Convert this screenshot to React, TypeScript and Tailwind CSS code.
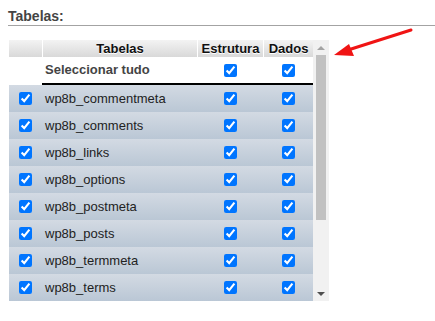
import React from 'react';

const tables = [
  'wp8b_commentmeta',
  'wp8b_comments',
  'wp8b_links',
  'wp8b_options',
  'wp8b_postmeta',
  'wp8b_posts',
  'wp8b_termmeta',
  'wp8b_terms',
];

const Check: React.FC = () => (
  <input type="checkbox" defaultChecked className="w-[13px] h-[13px] m-0 accent-[#0075ff]" />
);

const App: React.FC = () => {
  return (
    <div className="relative w-[435px] h-[321px] bg-white font-['Liberation_Sans',Arial,sans-serif] overflow-hidden">
      <div className="pt-[8px] pl-[8px]">
        <h2 className="text-[14px] leading-[16px] font-bold text-[#444] border-b border-[#a3a3a3] pb-[1px]">Tabelas:</h2>
      </div>

      <div className="flex mt-[14px] ml-[9px]">
        <div className="w-[304px]">
          {/* header */}
          <div className="grid grid-cols-[33px_155px_66px_50px] h-[17px] text-[13px] leading-[17px] font-bold text-[#111] [text-shadow:0_1px_0_#fff]">
            <div className="bg-linear-to-b from-[#f3f3f3] to-[#d9d9d9]" />
            <div className="bg-linear-to-b from-[#f3f3f3] to-[#d9d9d9] border-l border-white text-center">Tabelas</div>
            <div className="bg-linear-to-b from-[#f3f3f3] to-[#d9d9d9] border-l border-white text-center">Estrutura</div>
            <div className="bg-linear-to-b from-[#f3f3f3] to-[#d9d9d9] border-l border-white text-center">Dados</div>
          </div>

          {/* select all */}
          <div className="grid grid-cols-[33px_155px_66px_50px] h-[28px] text-[13px] bg-white">
            <div />
            <div className="border-b-2 border-black flex items-center pl-[3px] font-bold text-[#444]">Seleccionar tudo</div>
            <div className="border-b-2 border-black flex items-center justify-center"><Check /></div>
            <div className="border-b-2 border-black flex items-center justify-center"><Check /></div>
          </div>

          {tables.map(t => (
            <div key={t} className="grid grid-cols-[33px_155px_66px_50px] h-[27px] text-[13px] text-[#222] bg-linear-to-b from-[#d3dae3] to-[#bac7d5]">
              <div className="flex items-center justify-center"><Check /></div>
              <div className="flex items-center pl-[3px]">{t}</div>
              <div className="flex items-center justify-center"><Check /></div>
              <div className="flex items-center justify-center"><Check /></div>
            </div>
          ))}
        </div>

        {/* scrollbar */}
        <div className="w-[16px] h-[261px] bg-[#f1f1f1] flex flex-col items-center">
          <div className="h-[15px] flex items-center justify-center">
            <div className="w-0 h-0 border-l-[4px] border-r-[4px] border-b-[4px] border-l-transparent border-r-transparent border-b-[#a3a3a3]" />
          </div>
          <div className="w-[10px] h-[165px] bg-[#c1c1c1]" />
          <div className="flex-1" />
          <div className="h-[15px] flex items-center justify-center">
            <div className="w-0 h-0 border-l-[4px] border-r-[4px] border-t-[4px] border-l-transparent border-r-transparent border-t-[#505050]" />
          </div>
        </div>
      </div>

      <svg className="absolute left-0 top-0 pointer-events-none" width="435" height="321">
        <line x1="411" y1="30" x2="348" y2="50" stroke="#f01414" strokeWidth="3" strokeLinecap="round" />
        <polygon points="334,55 349,44 354,56" fill="#f01414" />
      </svg>
    </div>
  );
};

export default App;
